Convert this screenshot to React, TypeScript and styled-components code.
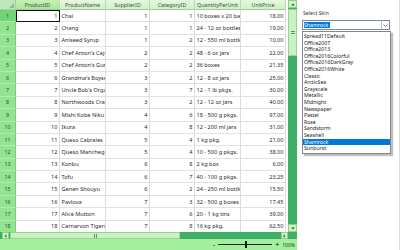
import React from 'react';
import styled, { createGlobalStyle } from 'styled-components';

const GlobalStyle = createGlobalStyle`
  html, body {
    margin: 0;
    padding: 0;
    background: #ffffff;
  }
  body {
    font-family: "Noto Sans", "Open Sans", sans-serif;
  }
`;

const Page = styled.div`
  display: flex;
  width: 400px;
  height: 250px;
  overflow: hidden;
  background: #ffffff;
`;

const GridControl = styled.div`
  width: 297px;
  height: 250px;
  display: flex;
  flex-direction: column;
`;

const GridBody = styled.div`
  display: flex;
  height: 232px;
  overflow: hidden;
`;

const Table = styled.div`
  width: 288px;
  display: flex;
  flex-direction: column;
  overflow: hidden;
`;

const Row = styled.div<{ $header?: boolean }>`
  display: flex;
  flex: none;
  height: ${(p) => (p.$header ? '10px' : '12.4px')};
`;

const Corner = styled.div`
  width: 16px;
  flex: none;
  box-sizing: border-box;
  background: #bfe6b8;
  border-right: 1px solid #9fcf98;
  border-bottom: 1px solid #9fcf98;
  position: relative;
  &::after {
    content: '';
    position: absolute;
    right: 1px;
    bottom: 1px;
    border-left: 5px solid transparent;
    border-bottom: 5px solid #8cbf86;
  }
`;

const HeadCell = styled.div<{ $w: number; $active?: boolean }>`
  width: ${(p) => p.$w}px;
  flex: none;
  box-sizing: border-box;
  background: ${(p) =>
    p.$active
      ? 'linear-gradient(#c6f1b8, #a9e59a)'
      : 'linear-gradient(#e6f9df, #cdf1c4)'};
  border-right: 1px solid #b5dcae;
  border-bottom: 1px solid #9fcf98;
  color: #4a4a4a;
  font-size: 5.4px;
  display: flex;
  align-items: center;
  justify-content: center;
  white-space: nowrap;
  overflow: hidden;
`;

const RowHead = styled.div<{ $active?: boolean }>`
  width: 16px;
  flex: none;
  box-sizing: border-box;
  background: ${(p) => (p.$active ? '#72d478' : '#93e490')};
  border-right: 1px solid #7fc87d;
  border-bottom: 1px solid #b4eab1;
  color: #2f4f2f;
  font-size: 5.4px;
  display: flex;
  align-items: center;
  justify-content: center;
`;

const Cell = styled.div<{ $w: number; $right?: boolean; $current?: boolean }>`
  width: ${(p) => p.$w}px;
  flex: none;
  box-sizing: border-box;
  border-right: 1px solid #dcdcdc;
  border-bottom: 1px solid #e2e2e2;
  color: #2a2a2a;
  font-size: 5.6px;
  display: flex;
  align-items: center;
  justify-content: ${(p) => (p.$right ? 'flex-end' : 'flex-start')};
  padding: 0 1.5px;
  white-space: nowrap;
  overflow: hidden;
  ${(p) => (p.$current ? 'outline: 1.5px solid #111; outline-offset: -1.5px;' : '')}
`;

const VScroll = styled.div`
  width: 9px;
  flex: none;
  display: flex;
  flex-direction: column;
  background: #3fae67;
`;

const ArrowBox = styled.div<{ $w?: number; $h?: number }>`
  width: ${(p) => (p.$w ? `${p.$w}px` : '100%')};
  height: ${(p) => (p.$h ? `${p.$h}px` : '100%')};
  flex: none;
  box-sizing: border-box;
  background: #cdf3c6;
  border: 1px solid #8fcf8a;
  display: flex;
  align-items: center;
  justify-content: center;
`;

const VThumb = styled.div`
  height: 47px;
  flex: none;
  box-sizing: border-box;
  margin: 1px 0;
  background: #c9f1c1;
  border: 1px solid #97d392;
  display: flex;
  align-items: center;
  justify-content: center;
`;

const Grip = styled.div<{ $vertical?: boolean }>`
  width: ${(p) => (p.$vertical ? '4px' : '3px')};
  height: ${(p) => (p.$vertical ? '3px' : '4px')};
  background: repeating-linear-gradient(
    ${(p) => (p.$vertical ? '180deg' : '90deg')},
    #4d9c4a 0 1px,
    transparent 1px 2px
  );
`;

const Spacer = styled.div`
  flex: 1;
`;

const HScrollRow = styled.div`
  display: flex;
  height: 7px;
  flex: none;
`;

const HScroll = styled.div`
  width: 288px;
  display: flex;
  background: #3fae67;
  padding-left: 2px;
  box-sizing: border-box;
`;

const HThumb = styled.div`
  width: 170px;
  flex: none;
  box-sizing: border-box;
  margin: 0 1px;
  background: #c9f1c1;
  border: 1px solid #97d392;
  display: flex;
  align-items: center;
  justify-content: center;
`;

const ScrollCorner = styled.div`
  width: 9px;
  background: #3fae67;
`;

const StatusBar = styled.div`
  flex: 1;
  background: #a3ef9d;
  display: flex;
  align-items: center;
  justify-content: flex-end;
  gap: 3px;
  padding-right: 2px;
  font-size: 5px;
  color: #333;
`;

const ZoomTrack = styled.div`
  width: 54px;
  height: 1px;
  background: #222;
  position: relative;
`;

const ZoomKnob = styled.div`
  position: absolute;
  left: 27px;
  top: -3px;
  width: 1.5px;
  height: 7px;
  background: #111;
`;

const Sign = styled.span`
  font-size: 7px;
  line-height: 1;
  color: #111;
`;

const SidePanel = styled.div`
  flex: 1;
  border-right: 1px solid #dedede;
  padding: 9px 0 0 5px;
  display: flex;
  flex-direction: column;
`;

const Label = styled.div`
  font-size: 5.2px;
  color: #333;
  height: 11px;
  padding-left: 1px;
`;

const Combo = styled.div`
  width: 88px;
  height: 10px;
  box-sizing: border-box;
  border: 1px solid #7a8a9c;
  display: flex;
  align-items: center;
  padding-left: 1px;
`;

const ComboText = styled.span`
  background: #0078d7;
  color: #ffffff;
  font-size: 5.2px;
  line-height: 6px;
  padding: 0 2px 0 0;
  width: 24px;
`;

const ComboButton = styled.div`
  margin-left: auto;
  width: 7px;
  height: 8px;
  border-left: 1px solid #c8c8c8;
  display: flex;
  align-items: center;
  justify-content: center;
`;

const ListBox = styled.div`
  width: 89px;
  margin-top: 1px;
  box-sizing: border-box;
  border: 1px solid #828790;
  background: #fff;
  box-shadow: 2px 2px 1px rgba(0, 0, 0, 0.25);
  padding: 1px 0;
`;

const ListItem = styled.div<{ $selected?: boolean }>`
  height: 6.6px;
  font-size: 5.2px;
  line-height: 6.6px;
  padding-left: 1px;
  color: ${(p) => (p.$selected ? '#fff' : '#222')};
  background: ${(p) => (p.$selected ? '#0078d7' : 'transparent')};
  white-space: nowrap;
`;

const columns = [
  { name: 'ProductID', w: 44, right: true },
  { name: 'ProductName', w: 46 },
  { name: 'SupplierID', w: 44, right: true },
  { name: 'CategoryID', w: 45, right: true },
  { name: 'QuantityPerUnit', w: 46 },
  { name: 'UnitPrice', w: 45, right: true },
];

const products: (string | number)[][] = [
  [1, 'Chai', 1, 1, '10 boxes x 20 bags', '18.00'],
  [2, 'Chang', 1, 1, '24 - 12 oz bottles', '19.00'],
  [3, 'Aniseed Syrup', 1, 2, '12 - 550 ml bottles', '10.00'],
  [4, "Chef Anton's Cajun Seasoning", 2, 2, '48 - 6 oz jars', '22.00'],
  [5, "Chef Anton's Gumbo Mix", 2, 2, '36 boxes', '21.35'],
  [6, "Grandma's Boysenberry Spread", 3, 2, '12 - 8 oz jars', '25.00'],
  [7, "Uncle Bob's Organic Dried Pears", 3, 7, '12 - 1 lb pkgs.', '30.00'],
  [8, 'Northwoods Cranberry Sauce', 3, 2, '12 - 12 oz jars', '40.00'],
  [9, 'Mishi Kobe Niku', 4, 6, '18 - 500 g pkgs.', '97.00'],
  [10, 'Ikura', 4, 8, '12 - 200 ml jars', '31.00'],
  [11, 'Queso Cabrales', 5, 4, '1 kg pkg.', '21.00'],
  [12, 'Queso Manchego La Pastora', 5, 4, '10 - 500 g pkgs.', '38.00'],
  [13, 'Konbu', 6, 8, '2 kg box', '6.00'],
  [14, 'Tofu', 6, 7, '40 - 100 g pkgs.', '23.25'],
  [15, 'Genen Shouyu', 6, 2, '24 - 250 ml bottles', '15.50'],
  [16, 'Pavlova', 7, 3, '32 - 500 g boxes', '17.45'],
  [17, 'Alice Mutton', 7, 6, '20 - 1 kg tins', '39.00'],
  [18, 'Carnarvon Tigers', 7, 8, '16 kg pkg.', '62.50'],
];

const skins = [
  'Spread11Default',
  'Office2007',
  'Office2013',
  'Office2016Colorful',
  'Office2016DarkGray',
  'Office2016White',
  'Classic',
  'ArcticSea',
  'Grayscale',
  'Metallic',
  'Midnight',
  'Newspaper',
  'Pastel',
  'Rose',
  'Sandstorm',
  'Seashell',
  'Shamrock',
  'Sunburst',
];

const Tri = ({ dir, color = '#2d5a2d' }: { dir: 'up' | 'down' | 'left' | 'right'; color?: string }) => {
  const pts = {
    up: '0,4 3,1 6,4',
    down: '0,1 3,4 6,1',
    left: '4,0 1,3 4,6',
    right: '1,0 4,3 1,6',
  }[dir];
  const vertical = dir === 'up' || dir === 'down';
  return (
    <svg width={vertical ? 4 : 3} height={vertical ? 3 : 4} viewBox={vertical ? '0 0 6 5' : '0 0 5 6'}>
      <polygon points={pts} fill={color} />
    </svg>
  );
};

export default function App() {
  return (
    <Page>
      <GlobalStyle />
      <GridControl>
        <GridBody>
          <Table>
            <Row $header>
              <Corner />
              {columns.map((c, i) => (
                <HeadCell key={c.name} $w={c.w} $active={i === 0}>
                  {c.name}
                </HeadCell>
              ))}
            </Row>
            {products.map((p, r) => (
              <Row key={r}>
                <RowHead $active={r === 0}>{r + 1}</RowHead>
                {columns.map((c, i) => (
                  <Cell key={c.name} $w={c.w} $right={c.right} $current={r === 0 && i === 0}>
                    {p[i]}
                  </Cell>
                ))}
              </Row>
            ))}
          </Table>
          <VScroll>
            <ArrowBox $h={8}>
              <Tri dir="up" />
            </ArrowBox>
            <VThumb>
              <Grip $vertical />
            </VThumb>
            <Spacer />
            <ArrowBox $h={8}>
              <Tri dir="down" />
            </ArrowBox>
          </VScroll>
        </GridBody>
        <HScrollRow>
          <HScroll>
            <ArrowBox $w={7}>
              <Tri dir="left" />
            </ArrowBox>
            <HThumb>
              <Grip />
            </HThumb>
            <Spacer />
            <ArrowBox $w={7}>
              <Tri dir="right" />
            </ArrowBox>
          </HScroll>
          <ScrollCorner />
        </HScrollRow>
        <StatusBar>
          <Sign>-</Sign>
          <ZoomTrack>
            <ZoomKnob />
          </ZoomTrack>
          <Sign>+</Sign>
          <span>100%</span>
        </StatusBar>
      </GridControl>
      <SidePanel>
        <Label>Select Skin</Label>
        <Combo>
          <ComboText>Shamrock</ComboText>
          <ComboButton>
            <svg width="5" height="3" viewBox="0 0 10 6">
              <polyline points="1,1 5,5 9,1" fill="none" stroke="#444" strokeWidth="1.4" />
            </svg>
          </ComboButton>
        </Combo>
        <ListBox>
          {skins.map((s) => (
            <ListItem key={s} $selected={s === 'Shamrock'}>
              {s}
            </ListItem>
          ))}
        </ListBox>
      </SidePanel>
    </Page>
  );
}
